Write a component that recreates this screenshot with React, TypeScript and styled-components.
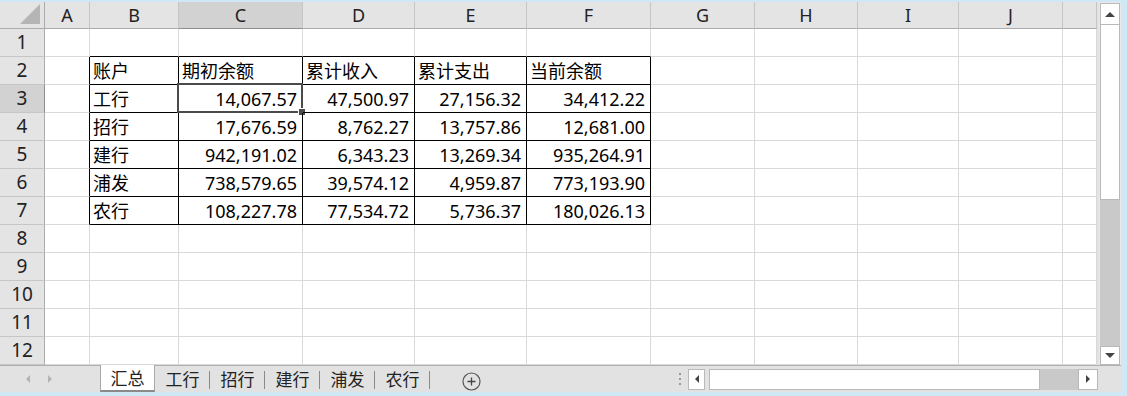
import React from "react";
import styled, { createGlobalStyle, css } from "styled-components";

const GlobalStyle = createGlobalStyle`
  html, body { margin: 0; padding: 0; background: #cfe8f5; }
  body { font-family: "Noto Sans", "Noto Sans CJK SC", sans-serif; }
  * { box-sizing: border-box; }
`;

const COLS = [45, 45, 89, 124, 112, 112, 124, 104, 103, 101, 104, 34];
const LETTERS = ["A", "B", "C", "D", "E", "F", "G", "H", "I", "J", ""];

const Frame = styled.div`
  width: 1127px;
  height: 396px;
  padding: 2px 6px 4px 0;
  display: flex;
  flex-direction: column;
  background: #cfe8f5;
  overflow: hidden;
`;

const Top = styled.div`
  display: flex;
  gap: 2px;
  height: 363px;
  background: #e2e2e2;
`;

const Sheet = styled.div`
  display: grid;
  grid-template-columns: ${COLS.map((c) => c + "px").join(" ")};
  grid-template-rows: 27px repeat(12, 28px);
  width: 1097px;
  background: #fff;
  overflow: hidden;
  color: #000;
`;

const Corner = styled.div`
  background: #e4e4e4;
  border-right: 1px solid #ababab;
  border-bottom: 1px solid #ababab;
  position: relative;
  &::after {
    content: "";
    position: absolute;
    right: 4px;
    bottom: 4px;
    width: 0;
    height: 0;
    border-left: 20px solid transparent;
    border-bottom: 20px solid #b5b5b5;
  }
`;

const ColHead = styled.div<{ $active?: boolean }>`
  display: flex;
  align-items: center;
  justify-content: center;
  background: ${(p) => (p.$active ? "#d2d2d2" : "#e4e4e4")};
  border-right: 1px solid #c6c6c6;
  border-bottom: 1px solid ${(p) => (p.$active ? "#8e8e8e" : "#ababab")};
  font-size: 18px;
  color: #222;
  line-height: 1;
`;

const RowHead = styled.div<{ $active?: boolean }>`
  display: flex;
  align-items: center;
  justify-content: center;
  background: ${(p) => (p.$active ? "#d2d2d2" : "#e4e4e4")};
  border-right: 1px solid ${(p) => (p.$active ? "#8e8e8e" : "#ababab")};
  border-bottom: 1px solid #c6c6c6;
  font-size: 19px;
  color: #222;
  line-height: 1;
`;

const Cell = styled.div<{
  $right?: boolean;
  $bottom?: boolean;
  $num?: boolean;
  $selected?: boolean;
}>`
  position: relative;
  display: flex;
  align-items: center;
  justify-content: ${(p) => (p.$num ? "flex-end" : "flex-start")};
  padding: ${(p) => (p.$num ? "0 5px 0 0" : "0 0 0 3px")};
  border-right: 1px solid ${(p) => (p.$right ? "#000" : "#d9d9d9")};
  border-bottom: 1px solid ${(p) => (p.$bottom ? "#000" : "#d9d9d9")};
  white-space: nowrap;
  line-height: 1;
  font-size: 18px;
  ${(p) =>
    p.$selected &&
    css`
      &::before {
        content: "";
        position: absolute;
        left: -2px;
        top: -2px;
        right: -1px;
        bottom: -1px;
        border: 2px solid #4b4b4b;
        pointer-events: none;
      }
      &::after {
        content: "";
        position: absolute;
        right: -4px;
        bottom: -4px;
        width: 6px;
        height: 6px;
        background: #4b4b4b;
        border: 1px solid #fff;
      }
    `}
`;

const VScroll = styled.div`
  width: 22px;
  display: flex;
  flex-direction: column;
  background: #e9e9e9;
  padding: 1px 1px 0 1px;
`;

const ArrowBox = styled.div<{ $h?: number; $w?: number }>`
  width: ${(p) => (p.$w ? p.$w + "px" : "100%")};
  height: ${(p) => (p.$h ? p.$h + "px" : "100%")};
  background: #fff;
  border: 1px solid #b9b9b9;
  display: flex;
  align-items: center;
  justify-content: center;
  flex-shrink: 0;
`;

const VThumb = styled.div`
  height: 175px;
  background: #fff;
  border: 1px solid #b9b9b9;
  border-top: none;
`;

const VTrack = styled.div`
  flex: 1;
  background: #c9c9c9;
`;

const TabBar = styled.div`
  height: 27px;
  width: 1121px;
  background: #e2e2e2;
  border-top: 1px solid #b0b0b0;
  display: flex;
  align-items: stretch;
`;

const Nav = styled.div`
  width: 100px;
  display: flex;
  align-items: center;
  padding-left: 26px;
  gap: 18px;
`;

const Tabs = styled.div`
  display: flex;
  align-items: stretch;
`;

const Tab = styled.div<{ $active?: boolean }>`
  position: relative;
  width: 55px;
  display: flex;
  align-items: center;
  justify-content: center;
  font-size: 17px;
  color: #222;
  margin-top: -1px;
  ${(p) =>
    p.$active
      ? css`
          background: #fff;
          border-left: 1px solid #a8a8a8;
          border-right: 1px solid #a8a8a8;
          border-bottom: 2px solid #8a8a8a;
        `
      : css`
          &::after {
            content: "";
            position: absolute;
            right: 0;
            top: 6px;
            bottom: 3px;
            width: 1px;
            background: #8a8a8a;
          }
        `}
`;

const Plus = styled.div`
  width: 19px;
  height: 19px;
  margin: 4px 0 0 32px;
  align-self: center;
  display: flex;
`;

const Dots = styled.div`
  margin-left: auto;
  width: 16px;
  display: flex;
  flex-direction: column;
  align-items: center;
  justify-content: center;
  gap: 3px;
`;

const Dot = styled.span`
  width: 2px;
  height: 2px;
  background: #9a9a9a;
`;

const HScroll = styled.div`
  display: flex;
  align-items: center;
  padding: 3px 0;
  width: 410px;
  margin-right: 23px;
`;

const HThumb = styled.div`
  width: 331px;
  height: 21px;
  margin-left: 4px;
  background: #fff;
  border: 1px solid #b9b9b9;
`;

const HTrack = styled.div`
  width: 38px;
  height: 21px;
  background: #c9c9c9;
`;

const Tri = ({ dir, color = "#444", size = 5 }: { dir: "up" | "down" | "left" | "right"; color?: string; size?: number }) => {
  const s = size;
  const pts =
    dir === "up"
      ? `0,${s} ${s},0 ${2 * s},${s}`
      : dir === "down"
      ? `0,0 ${2 * s},0 ${s},${s}`
      : dir === "left"
      ? `${s},0 ${s},${2 * s} 0,${s}`
      : `0,0 0,${2 * s} ${s},${s}`;
  const w = dir === "up" || dir === "down" ? 2 * s : s;
  const h = dir === "up" || dir === "down" ? s : 2 * s;
  return (
    <svg width={w} height={h} viewBox={`0 0 ${w} ${h}`}>
      <polygon points={pts} fill={color} />
    </svg>
  );
};

const data: string[][] = [
  ["账户", "期初余额", "累计收入", "累计支出", "当前余额"],
  ["工行", "14,067.57", "47,500.97", "27,156.32", "34,412.22"],
  ["招行", "17,676.59", "8,762.27", "13,757.86", "12,681.00"],
  ["建行", "942,191.02", "6,343.23", "13,269.34", "935,264.91"],
  ["浦发", "738,579.65", "39,574.12", "4,959.87", "773,193.90"],
  ["农行", "108,227.78", "77,534.72", "5,736.37", "180,026.13"],
];

export default function App() {
  const rows = [];
  for (let r = 1; r <= 12; r++) {
    rows.push(
      <RowHead key={`h${r}`} $active={r === 3}>
        {r}
      </RowHead>
    );
    for (let c = 0; c < 11; c++) {
      const inTable = r >= 2 && r <= 7 && c >= 1 && c <= 5;
      const leftOfTable = r >= 2 && r <= 7 && c === 0;
      const aboveTable = r === 1 && c >= 1 && c <= 5;
      const value = inTable ? data[r - 2][c - 1] : "";
      const num = inTable && r >= 3 && c >= 2;
      rows.push(
        <Cell
          key={`${r}-${c}`}
          $right={inTable || leftOfTable}
          $bottom={inTable || aboveTable}
          $num={num}
          $selected={r === 3 && c === 2}
        >
          {value}
        </Cell>
      );
    }
  }

  return (
    <>
      <GlobalStyle />
      <Frame>
        <Top>
          <Sheet>
            <Corner />
            {LETTERS.map((l, i) => (
              <ColHead key={i} $active={l === "C"}>
                {l}
              </ColHead>
            ))}
            {rows}
          </Sheet>
          <VScroll>
            <ArrowBox $h={22}>
              <Tri dir="up" />
            </ArrowBox>
            <VThumb />
            <VTrack />
            <ArrowBox $h={19}>
              <Tri dir="down" />
            </ArrowBox>
          </VScroll>
        </Top>
        <TabBar>
          <Nav>
            <Tri dir="left" color="#b4b4b4" size={4} />
            <Tri dir="right" color="#b4b4b4" size={4} />
          </Nav>
          <Tabs>
            <Tab $active>汇总</Tab>
            <Tab>工行</Tab>
            <Tab>招行</Tab>
            <Tab>建行</Tab>
            <Tab>浦发</Tab>
            <Tab>农行</Tab>
          </Tabs>
          <Plus>
            <svg width="19" height="19" viewBox="0 0 19 19">
              <circle cx="9.5" cy="9.5" r="8.5" fill="none" stroke="#555" strokeWidth="1.2" />
              <path d="M9.5 5.5v8M5.5 9.5h8" stroke="#444" strokeWidth="1.3" />
            </svg>
          </Plus>
          <Dots>
            <Dot />
            <Dot />
            <Dot />
          </Dots>
          <HScroll>
            <ArrowBox $w={17} $h={21}>
              <Tri dir="left" color="#444" size={4} />
            </ArrowBox>
            <HThumb />
            <HTrack />
            <ArrowBox $w={20} $h={21}>
              <Tri dir="right" color="#444" size={4} />
            </ArrowBox>
          </HScroll>
        </TabBar>
      </Frame>
    </>
  );
}
